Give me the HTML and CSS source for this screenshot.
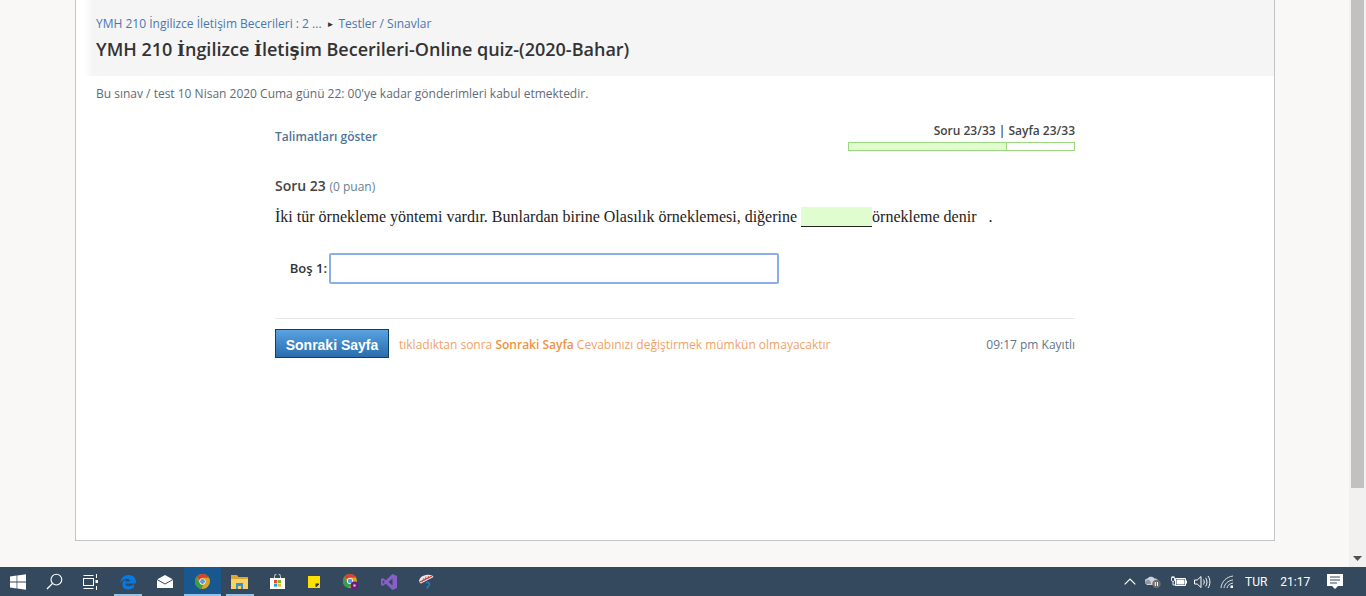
FILE: index.html
```html
<!DOCTYPE html>
<html lang="tr">
<head>
<meta charset="utf-8">
<title>YMH 210</title>
<link rel="stylesheet" href="styles.css">
</head>
<body>
<div class="window">
  <div class="page">
    <main class="card">
      <header class="head">
        <nav class="crumbs"><a>YMH 210 İngilizce İletişim Becerileri : 2 ...</a><span class="sep">►</span><a>Testler / Sınavlar</a></nav>
        <h1 class="title">YMH 210 <span class="fb">İ</span>ngilizce <span class="fb">İ</span>leti<span class="fs">ş</span>im Becerileri-Online quiz-(2020-Bahar)</h1>
      </header>
      <p class="notice">Bu sınav / test 10 Nisan 2020 Cuma günü 22: 00'ye kadar gönderimleri kabul etmektedir.</p>
      <section class="quiz">
        <div class="quiz-top">
          <a class="instr">Talimatları göster</a>
          <div class="progress">
            <div class="progress-text">Soru 23/33 | Sayfa 23/33</div>
            <div class="bar"><div class="bar-fill"></div></div>
          </div>
        </div>
        <h2 class="q-head">Soru 23 <span class="points">(0 puan)</span></h2>
        <p class="q-text">İki tür örnekleme yöntemi vardır. Bunlardan birine Olasılık örneklemesi, diğerine <span class="blank"></span>örnekleme denir <span class="dot">.</span></p>
        <div class="answer">
          <label class="answer-label">Boş 1:</label>
          <div class="answer-input"></div>
        </div>
        <div class="foot">
          <button class="next">Sonraki Sayfa</button>
          <span class="warn">tıkladıktan sonra <b>Sonraki Sayfa</b> Cevabınızı değiştirmek mümkün olmayacaktır</span>
          <span class="saved">09:17 pm Kayıtlı</span>
        </div>
      </section>
    </main>
    <div class="scrollbar">
      <div class="thumb"></div>
      <svg class="arrow" width="9" height="5" viewBox="0 0 9 5"><path d="M0 0h9L4.500 5z" fill="#505050"/></svg>
    </div>
  </div>
  <footer class="taskbar">
    <div class="tb-left">
      <span class="tb-item tb-start"><svg width="16" height="16" viewBox="0 0 16 16"><path fill="#fff" d="M0 2.400l6.600-.9v6.100H0zM7.300 1.400L16 .2v7.400H7.300zM0 8.400h6.600v6.100L0 13.600zM7.300 8.400H16v7.400l-8.700-1.200z"/></svg></span>
      <span class="tb-item"><svg width="17" height="17" viewBox="0 0 18 18"><circle cx="11" cy="7" r="5.700" fill="none" stroke="#fff" stroke-width="1.200"/><path d="M7 11L1 17" stroke="#fff" stroke-width="1.400"/></svg></span>
      <span class="tb-item tb-view"><svg width="16" height="16" viewBox="0 0 16 16" fill="none" stroke="#fff" stroke-width="1"><path d="M.5 1.500h10M.5 14.500h10"/><rect x=".5" y="4.500" width="10" height="7"/><path d="M13.500 0v4M13.500 12v4"/><rect x="12.500" y="6" width="2.500" height="3" fill="#fff" stroke="none"/></svg></span>
      <span class="tb-item tb-open"><svg width="16" height="16" viewBox="0 0 16 16"><path fill="#0a78dc" d="M8.400 1C3.800 1 .7 4.200.4 8.700 1.900 6.300 4.300 4.700 6.800 4.700c2.100 0 3.500 1.100 3.500 2.800H5c.2-.9.700-1.700 1.300-2.200C3.700 6.100 2.400 8.200 2.400 10.500c0 3.200 2.600 5 5.700 5 2.300 0 4.300-.7 5.900-2v-3.300c-1.300 1.200-3.300 2-5.200 2-2 0-3.400-.9-3.600-2.700h10.600c.1-.6.100-1.200.1-1.700C15.900 3.500 12.800 1 8.400 1z"/></svg></span>
      <span class="tb-item"><svg width="16" height="13" viewBox="0 0 16 13"><path fill="#fff" d="M0 4.500L8 0l8 4.500V13H0z"/><path d="M0 4.500L8 9l8-4.500" fill="none" stroke="#34495e" stroke-width="1"/></svg></span>
      <span class="tb-item tb-active"><svg width="15" height="15" viewBox="0 0 16 16"><circle cx="8" cy="8" r="8" fill="#d9a520"/><path fill="#d8402f" d="M8 0a8 8 0 0 1 7 4H8a4 4 0 0 0-3.700 2.400L1.500 3.200A8 8 0 0 1 8 0z"/><path fill="#3a9c48" d="M1.500 3.200l3.300 5.700A4 4 0 0 0 8.700 12l-1.900 4A8 8 0 0 1 1.500 3.200z"/><circle cx="8" cy="8" r="3.300" fill="#fff"/><circle cx="8" cy="8" r="2.600" fill="#5b95ea"/></svg></span>
      <span class="tb-item tb-open"><svg width="17" height="15" viewBox="0 0 17 15"><path fill="#e0a62c" d="M0 1h6l1.500 2H17v3H0z"/><path fill="#f8d264" d="M0 5h17v10H0z"/><path fill="#3e8ed0" d="M5 9h7v6h-2v-3H7v3H5z"/></svg></span>
      <span class="tb-item"><svg width="15" height="15" viewBox="0 0 15 15"><path d="M4.500 4V2.500a3 3 0 0 1 6 0V4" fill="none" stroke="#ddd" stroke-width="1"/><path fill="#fff" d="M0 4h15v11H0z"/><path fill="#e8502f" d="M4 6h3.200v3H4z"/><path fill="#7db928" d="M7.800 6H11v3H7.800z"/><path fill="#18a0e8" d="M4 9.600h3.200v3H4z"/><path fill="#f8b818" d="M7.800 9.600H11v3H7.800z"/></svg></span>
      <span class="tb-item"><svg width="12" height="12" viewBox="0 0 12 12"><path fill="#fce100" d="M0 0h12v12H0z"/><path fill="#333" d="M11 7.500v1L8.500 11h-1V7.500z"/></svg></span>
      <span class="tb-item"><svg width="16" height="16" viewBox="0 0 16 16"><circle cx="7" cy="7" r="7" fill="#d9a520"/><path fill="#d8402f" d="M7 0a7 7 0 0 1 6 3.500H7a3.500 3.500 0 0 0-3.200 2L1.300 2.800A7 7 0 0 1 7 0z"/><path fill="#3a9c48" d="M1.300 2.800l2.900 5A3.500 3.500 0 0 0 7.600 10.500L6 14A7 7 0 0 1 1.300 2.800z"/><circle cx="7" cy="7" r="3" fill="#fff"/><circle cx="7" cy="7" r="2.300" fill="#5b95ea"/><circle cx="11.500" cy="11.500" r="4" fill="#68217a"/><circle cx="11.500" cy="11.500" r="1.300" fill="#d8b8e0"/></svg></span>
      <span class="tb-item"><svg width="16" height="16" viewBox="0 0 16 16"><path fill="#8661c5" d="M11.500 0L16 2v12l-4.500 2-6.700-6.200L1.800 12 0 11V5l1.800-1 3 2.200zM1.800 6v4l2-2zM11.500 4.500L7.600 8l3.900 3.500z"/></svg></span>
      <span class="tb-item"><svg width="16" height="15" viewBox="0 0 16 15"><path fill="#e8e8e8" d="M1 7.500C1 4 5 1 9.500 .8 12.500.7 15 1.500 15.500 3L3 9.500C1.800 9.300 1 8.500 1 7.500z"/><path d="M4 8l2-4M7 6.500l1-4M10 5l.5-3" stroke="#d04040" stroke-width=".8"/><path d="M1 8.500l13-6.500" stroke="#c03a3a" stroke-width="1.100"/><path d="M8 9c1.500-1 3-.5 3.500.5.300 1.500-1 3-2.500 3.800l1 1.200" fill="none" stroke="#2a7fd0" stroke-width="1.300"/></svg></span>
    </div>
    <div class="tb-right">
      <svg class="tray-chev" width="12" height="7" viewBox="0 0 12 7"><path d="M.7 6.300L6 1l5.300 5.300" fill="none" stroke="#fff" stroke-width="1.200"/></svg>
      <svg class="tray-cloud" width="16" height="13" viewBox="0 0 16 13"><path fill="#cdd3d8" d="M1 9a3 3 0 0 1 1.500-5.500C4 1 8 1 9.500 3.500c2-.5 4 1 4 3.500H8v3H2z"/><path fill="#8a9aa8" d="M0 8a3 3 0 0 1 4-3c1 .5 2 1.500 2 4H1z"/><circle cx="11.500" cy="9" r="4.200" fill="#6d6d6d"/><path d="M10.300 7v4M12.500 7v4" stroke="#fff" stroke-width="1"/></svg>
      <svg class="tray-batt" width="16" height="11" viewBox="0 0 16 11" fill="none" stroke="#fff"><path d="M4.500 2.500h10v7h-10z" stroke-width="1"/><path fill="#fff" stroke="none" d="M5.500 3.500h8v5h-8zM15 4.500h1v3h-1z"/><path d="M.500 1.500v2.500c0 1 .7 1.500 1.500 1.500s1.500-.5 1.500-1.500V1.500zM1.200 0v1.500M2.800 0v1.500M2 5.500v3.500h2.500" stroke-width=".9"/></svg>
      <svg class="tray-vol" width="17" height="14" viewBox="0 0 17 14" fill="none" stroke="#fff" stroke-width="1"><path d="M.5 5v4h2.700L7 12.500V1.500L3.200 5zM9.500 4.500c1 1.500 1 3.500 0 5M11.700 2.800c1.700 2.500 1.700 6 0 8.500M14 1c2.500 3.500 2.500 8.500 0 12"/></svg>
      <svg class="tray-wifi" width="14" height="14" viewBox="0 0 14 14" fill="none" stroke="#dfe3e6" stroke-width="1"><path d="M1 13C1.500 7 6 2 13 1M4 13c.5-4 4-7.500 9-8M7 13c.3-2.300 2.500-4.500 6-5"/><rect x="10.500" y="10.500" width="2.500" height="2.500" fill="#fff" stroke="none"/></svg>
      <span class="tray-text tray-lang">TUR</span>
      <span class="tray-text tray-time">21:17</span>
      <svg class="tray-note" width="16" height="15" viewBox="0 0 16 15"><path fill="#fff" d="M0 0h16v12h-5l-3 3-3-3H0z"/><path d="M3 3h10M3 6h10M3 9h7" stroke="#34495e" stroke-width="1"/></svg>
    </div>
  </footer>
</div>
</body>
</html>
```
FILE: styles.css
```css
* { box-sizing: border-box; }
html, body { margin: 0; height: 100%; overflow: hidden; }
body { font-family: "Open Sans", "Noto Sans", sans-serif; color: #333; background: #f9f8f6; }
a { color: #4a78ae; text-decoration: none; }
.window { display: flex; flex-direction: column; height: 596px; }
.page { flex: 1; display: flex; min-height: 0; background: #f9f8f6; }
.card { width: 1200px; height: 541px; margin-left: 75px; margin-right: 74px; background: #fff; border: 1px solid #c4c4c4; border-top: 0; }
.head { height: 76px; margin-left: 8px; padding: 16px 0 0 12px; background: linear-gradient(90deg, #fff, #f5f5f5 9px); }
.crumbs { font-size: 12px; line-height: 16px; display: flex; align-items: center; }
.sep { font-size: 8px; margin: 0 4px 0 5px; color: #333; }
.title { margin: 5px 0 0; font-size: 18px; line-height: 24px; font-weight: 600; color: #333; }
.fb { font-family: "DejaVu Serif", serif; font-weight: 700; font-size: 17px; }
.fs { font-family: "DejaVu Sans", sans-serif; font-weight: 700; font-size: 17px; }
.notice { margin: 10px 0 0 20px; font-size: 12px; line-height: 16px; color: #5f6b75; }
.quiz { width: 800px; margin: 0 0 0 199px; }
.quiz-top { display: flex; justify-content: space-between; margin-top: 21px; height: 30px; }
.instr { font-size: 12px; font-weight: 600; line-height: 16px; margin-top: 6px; color: #4f749b; }
.progress { width: 227px; }
.progress-text { font-size: 12px; line-height: 16px; text-align: right; color: #444; font-weight: 600; }
.bar { height: 9px; margin-top: 3px; border: 1px solid #9cd87e; }
.bar-fill { width: 158px; height: 7px; background: #e0fdd0; border-right: 1px solid #9cd87e; }
.q-head { margin: 23px 0 0; font-size: 14px; line-height: 20px; font-weight: 600; color: #444; }
.points { font-size: 12px; font-weight: 400; color: #6a7f90; }
.q-text { margin: 7px 0 0; font-family: "Liberation Serif", serif; font-size: 16px; line-height: 26px; color: #222; white-space: nowrap; }
.blank { display: inline-block; width: 71px; height: 20px; background: #e0fdd0; border-bottom: 1px solid #222; vertical-align: -5px; }
.dot { margin-left: 8px; }
.answer { display: flex; align-items: center; gap: 2px; margin-top: 23px; }
.answer-label { width: 52px; padding-bottom: 2px; text-align: right; font-size: 13px; font-weight: 600; color: #333; }
.answer-input { width: 450px; flex: none; height: 31px; background: #fff; border: 2px solid #8aaee8; border-radius: 2px; }
.foot { display: flex; align-items: center; margin-top: 34px; padding-top: 10px; border-top: 1px solid #e8e8e8; }
.next { width: 114px; height: 29px; padding: 2px 0 0; border: 1px solid #0e3f6b; background: linear-gradient(#58a3e2, #2a6cad); color: #fff; font-family: "Liberation Sans", sans-serif; font-size: 14px; font-weight: 700; }
.warn { margin: 2px 0 0 10px; font-size: 12px; color: #f2a268; }
.warn b { font-weight: 600; color: #ee9340; }
.saved { margin: 2px 0 0 auto; font-size: 12px; color: #5f7689; }
.scrollbar { flex: 1; position: relative; background: #f1f1f1; }
.thumb { position: absolute; left: 2px; right: 2px; top: 0; height: 488px; background: #c1c1c1; }
.arrow { position: absolute; left: 4px; bottom: 6px; }
.taskbar { height: 29px; background: #34495e; display: flex; justify-content: space-between; }
.tb-left { display: flex; }
.tb-item { width: 37.200px; flex: none; display: flex; align-items: center; justify-content: center; height: 29px; }
.tb-start { width: 36px; }
.tb-view { width: 36.500px; }
.tb-open { background: linear-gradient(#8fc4e8, #8fc4e8) center bottom / 28px 2px no-repeat; }
.tb-active { background: #18578f; box-shadow: inset 0 -2px 0 #8fc4e8; }
.tb-right { display: flex; align-items: center; width: 250px; }
.tray-chev { margin-left: 8px; }
.tray-cloud { margin-left: 9px; }
.tray-batt { margin-left: 10px; }
.tray-vol { margin-left: 7px; }
.tray-wifi { margin-left: 9px; }
.tray-text { color: #fff; font-family: "Roboto", sans-serif; font-size: 12px; }
.tray-lang { margin-left: 11px; }
.tray-time { margin-left: 13px; }
.tray-note { margin-left: 17px; }
```
